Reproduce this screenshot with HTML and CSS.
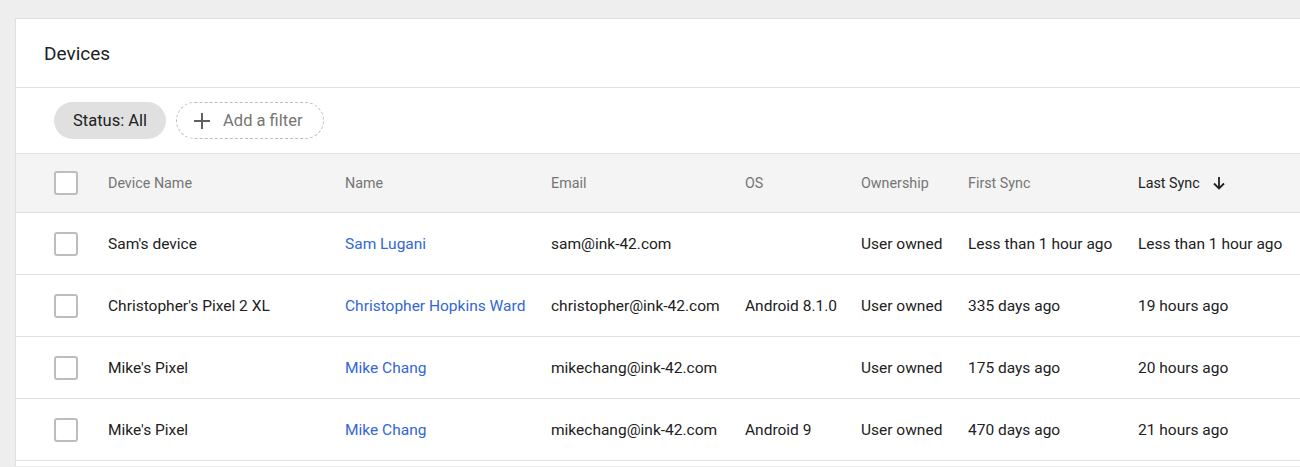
FILE: index.html
```html
<!DOCTYPE html>
<html>
<head>
<meta charset="utf-8">
<link rel="stylesheet" href="styles.css">
</head>
<body>
<div class="page">
  <div class="card">
    <div class="card-title">Devices</div>
    <div class="filters">
      <span class="chip chip-active">Status: All</span>
      <span class="chip chip-add">
        <svg class="plus" width="18" height="18" viewBox="0 0 18 18"><path d="M9 1v16M1 9h16" stroke="#616161" stroke-width="2" fill="none"/></svg>
        Add a filter
      </span>
    </div>
    <table class="devices">
      <colgroup>
        <col class="c-check"><col class="c-device"><col class="c-name"><col class="c-email"><col class="c-os"><col class="c-own"><col class="c-first"><col class="c-last">
      </colgroup>
      <thead>
        <tr>
          <th class="cb-cell"><span class="cb"></span></th>
          <th>Device Name</th>
          <th>Name</th>
          <th>Email</th>
          <th>OS</th>
          <th>Ownership</th>
          <th>First Sync</th>
          <th class="sorted">Last Sync <svg class="arrow" width="16" height="16" viewBox="0 0 16 16"><path d="M8 2v11M3 8.5l5 5 5-5" stroke="#212121" stroke-width="1.8" fill="none"/></svg></th>
        </tr>
      </thead>
      <tbody>
        <tr>
          <td class="cb-cell"><span class="cb"></span></td>
          <td>Sam's device</td>
          <td><a class="link">Sam Lugani</a></td>
          <td>sam@ink-42.com</td>
          <td></td>
          <td>User owned</td>
          <td>Less than 1 hour ago</td>
          <td>Less than 1 hour ago</td>
        </tr>
        <tr>
          <td class="cb-cell"><span class="cb"></span></td>
          <td>Christopher's Pixel 2 XL</td>
          <td><a class="link">Christopher Hopkins Ward</a></td>
          <td>christopher@ink-42.com</td>
          <td>Android 8.1.0</td>
          <td>User owned</td>
          <td>335 days ago</td>
          <td>19 hours ago</td>
        </tr>
        <tr>
          <td class="cb-cell"><span class="cb"></span></td>
          <td>Mike's Pixel</td>
          <td><a class="link">Mike Chang</a></td>
          <td>mikechang@ink-42.com</td>
          <td></td>
          <td>User owned</td>
          <td>175 days ago</td>
          <td>20 hours ago</td>
        </tr>
        <tr>
          <td class="cb-cell"><span class="cb"></span></td>
          <td>Mike's Pixel</td>
          <td><a class="link">Mike Chang</a></td>
          <td>mikechang@ink-42.com</td>
          <td>Android 9</td>
          <td>User owned</td>
          <td>470 days ago</td>
          <td>21 hours ago</td>
        </tr>
      </tbody>
    </table>
  </div>
</div>
</body>
</html>
```
FILE: styles.css
```css
html, body {
  margin: 0;
  padding: 0;
  background: #eeeeee;
  font-family: Roboto, "Liberation Sans", Arial, sans-serif;
  color: #212121;
  overflow: hidden;
}
.page {
  padding: 18px 0 0 15px;
}
.card {
  background: #fff;
  border: 1px solid #e0e0e0;
  border-right: none;
  border-bottom: none;
  padding-bottom: 5px;
}
.card-title {
  height: 68px;
  display: flex;
  align-items: center;
  padding-left: 28px;
  font-size: 19px;
  color: #202124;
  border-bottom: 1px solid #e0e0e0;
}
.filters {
  height: 66px;
  display: flex;
  align-items: center;
  gap: 10px;
  padding-left: 38px;
  border-bottom: 1px solid #e0e0e0;
  box-sizing: border-box;
}
.chip {
  height: 37px;
  box-sizing: border-box;
  border-radius: 19px;
  display: inline-flex;
  align-items: center;
  font-size: 16.5px;
}
.chip-active {
  background: #e0e0e0;
  padding: 0 19px;
  color: #212121;
}
.chip-add {
  border: 1px dashed #bdbdbd;
  padding: 0 20px 0 16px;
  color: #757575;
  gap: 12px;
}
.plus { display: block; }
.devices {
  border-collapse: collapse;
  table-layout: fixed;
  width: 100%;
}
.c-check { width: 92px; }
.c-device { width: 237px; }
.c-name { width: 206px; }
.c-email { width: 194px; }
.c-os { width: 116px; }
.c-own { width: 107px; }
.c-first { width: 170px; }
.devices th {
  background: #f4f4f4;
  height: 58px;
  text-align: left;
  font-weight: 400;
  font-size: 14.3px;
  color: #757575;
  padding: 0;
  border-bottom: 1px solid #e0e0e0;
  white-space: nowrap;
}
.devices th.sorted { color: #212121; }
.arrow { vertical-align: -3px; margin-left: 8px; }
.devices td {
  height: 61px;
  padding: 0;
  font-size: 15.5px;
  color: #212121;
  border-bottom: 1px solid #e0e0e0;
  white-space: nowrap;
}
.cb-cell { padding-left: 38px !important; }
.cb {
  display: block;
  width: 20px;
  height: 20px;
  border: 2px solid #bdbdbd;
  border-radius: 3px;
  background: #fff;
}
.link {
  color: #3367d6;
  text-decoration: none;
}
```
